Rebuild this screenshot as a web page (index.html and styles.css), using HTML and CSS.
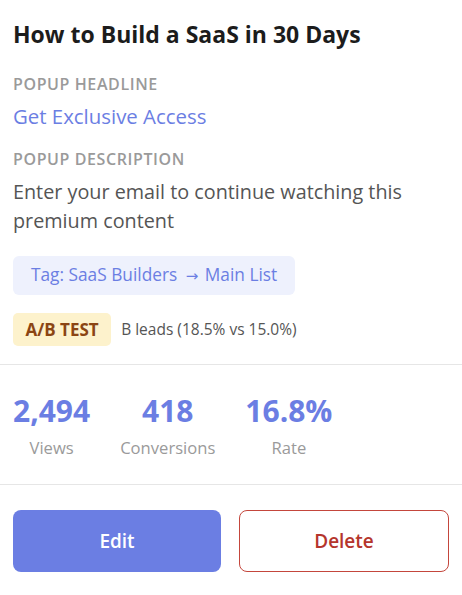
FILE: index.html
```html
<!DOCTYPE html>
<html lang="en">
<head>
<meta charset="utf-8">
<title>Popup card</title>
<link rel="stylesheet" href="styles.css">
</head>
<body>
<div class="card">
  <div class="card-body">
    <h2 class="title">How to Build a SaaS in 30 Days</h2>
    <div class="field">
      <div class="label">Popup Headline</div>
      <div class="headline">Get Exclusive Access</div>
    </div>
    <div class="field">
      <div class="label">Popup Description</div>
      <div class="desc">Enter your email to continue watching this premium content</div>
    </div>
    <div class="tag">Tag: SaaS Builders <span class="arrow">→</span> Main List</div>
    <div class="ab">
      <span class="ab-badge">A/B TEST</span>
      <span class="ab-text">B leads (18.5% vs 15.0%)</span>
    </div>
  </div>
  <div class="stats">
    <div class="stat">
      <div class="stat-value">2,494</div>
      <div class="stat-label">Views</div>
    </div>
    <div class="stat">
      <div class="stat-value">418</div>
      <div class="stat-label">Conversions</div>
    </div>
    <div class="stat">
      <div class="stat-value">16.8%</div>
      <div class="stat-label">Rate</div>
    </div>
  </div>
  <div class="actions">
    <button class="btn btn-edit">Edit</button>
    <button class="btn btn-delete">Delete</button>
  </div>
</div>
</body>
</html>
```
FILE: styles.css
```css
* { box-sizing: content-box; }
html, body { margin: 0; padding: 0; background: #fff; }
body {
  font-family: "Open Sans", "Noto Sans", sans-serif;
  color: #555;
}
.card { width: 462px; }
.card-body {
  padding: 19px 13px 18px;
  border-bottom: 1px solid #e6e6e6;
}
.title {
  margin: 0 0 24px;
  font-size: 23px;
  line-height: 30px;
  font-weight: 700;
  color: #1c1c1c;
}
.field { margin-bottom: 18px; }
.label {
  font-size: 16px;
  line-height: 22px;
  font-weight: 600;
  letter-spacing: 0.6px;
  text-transform: uppercase;
  color: #9a9a9a;
  margin-bottom: 7px;
}
.headline {
  font-size: 20.4px;
  line-height: 28px;
  color: #6b7ee3;
}
.desc {
  font-size: 19.8px;
  line-height: 29px;
  color: #555;
}
.field + .field { margin-bottom: 21px; }
.tag {
  display: inline-block;
  padding: 9px 18px;
  font-size: 17.3px;
  line-height: 20.5px;
  font-weight: 500;
  color: #6b7ee3;
  background: #eef1fd;
  border-radius: 6px;
  margin-bottom: 18px;
}
.arrow {
  font-family: "DejaVu Sans", sans-serif;
  font-weight: 400;
  font-size: 15px;
  line-height: 1;
  margin: 0 2px 0 4px;
}
.ab {
  display: flex;
  align-items: center;
  gap: 10px;
}
.ab-badge {
  padding: 6px 12.5px;
  font-size: 17px;
  line-height: 21.5px;
  font-weight: 700;
  color: #8b4513;
  background: #fdf2cc;
  border-radius: 5px;
}
.ab-text {
  font-size: 15.5px;
  color: #555;
}
.stats {
  display: flex;
  gap: 30px;
  padding: 28px 13px 25px;
  border-bottom: 1px solid #e6e6e6;
}
.stat { text-align: center; }
.stat-value {
  font-size: 30px;
  line-height: 36px;
  font-weight: 700;
  color: #6b7ee3;
}
.stat-label {
  margin-top: 8px;
  font-size: 16.6px;
  line-height: 22px;
  color: #9a9a9a;
}
.actions {
  display: flex;
  gap: 18px;
  padding: 25px 13px 23px;
}
.btn {
  flex: 1 1 0;
  height: 62px;
  padding: 0;
  margin: 0;
  border: none;
  border-radius: 8px;
  font-family: inherit;
  font-size: 19px;
  font-weight: 600;
  cursor: pointer;
}
.btn-edit {
  background: #6b7ee3;
  color: #fff;
}
.btn-delete {
  background: #fff;
  color: #b5352c;
  border: 1px solid #c4463c;
  height: 60px;
}
```
